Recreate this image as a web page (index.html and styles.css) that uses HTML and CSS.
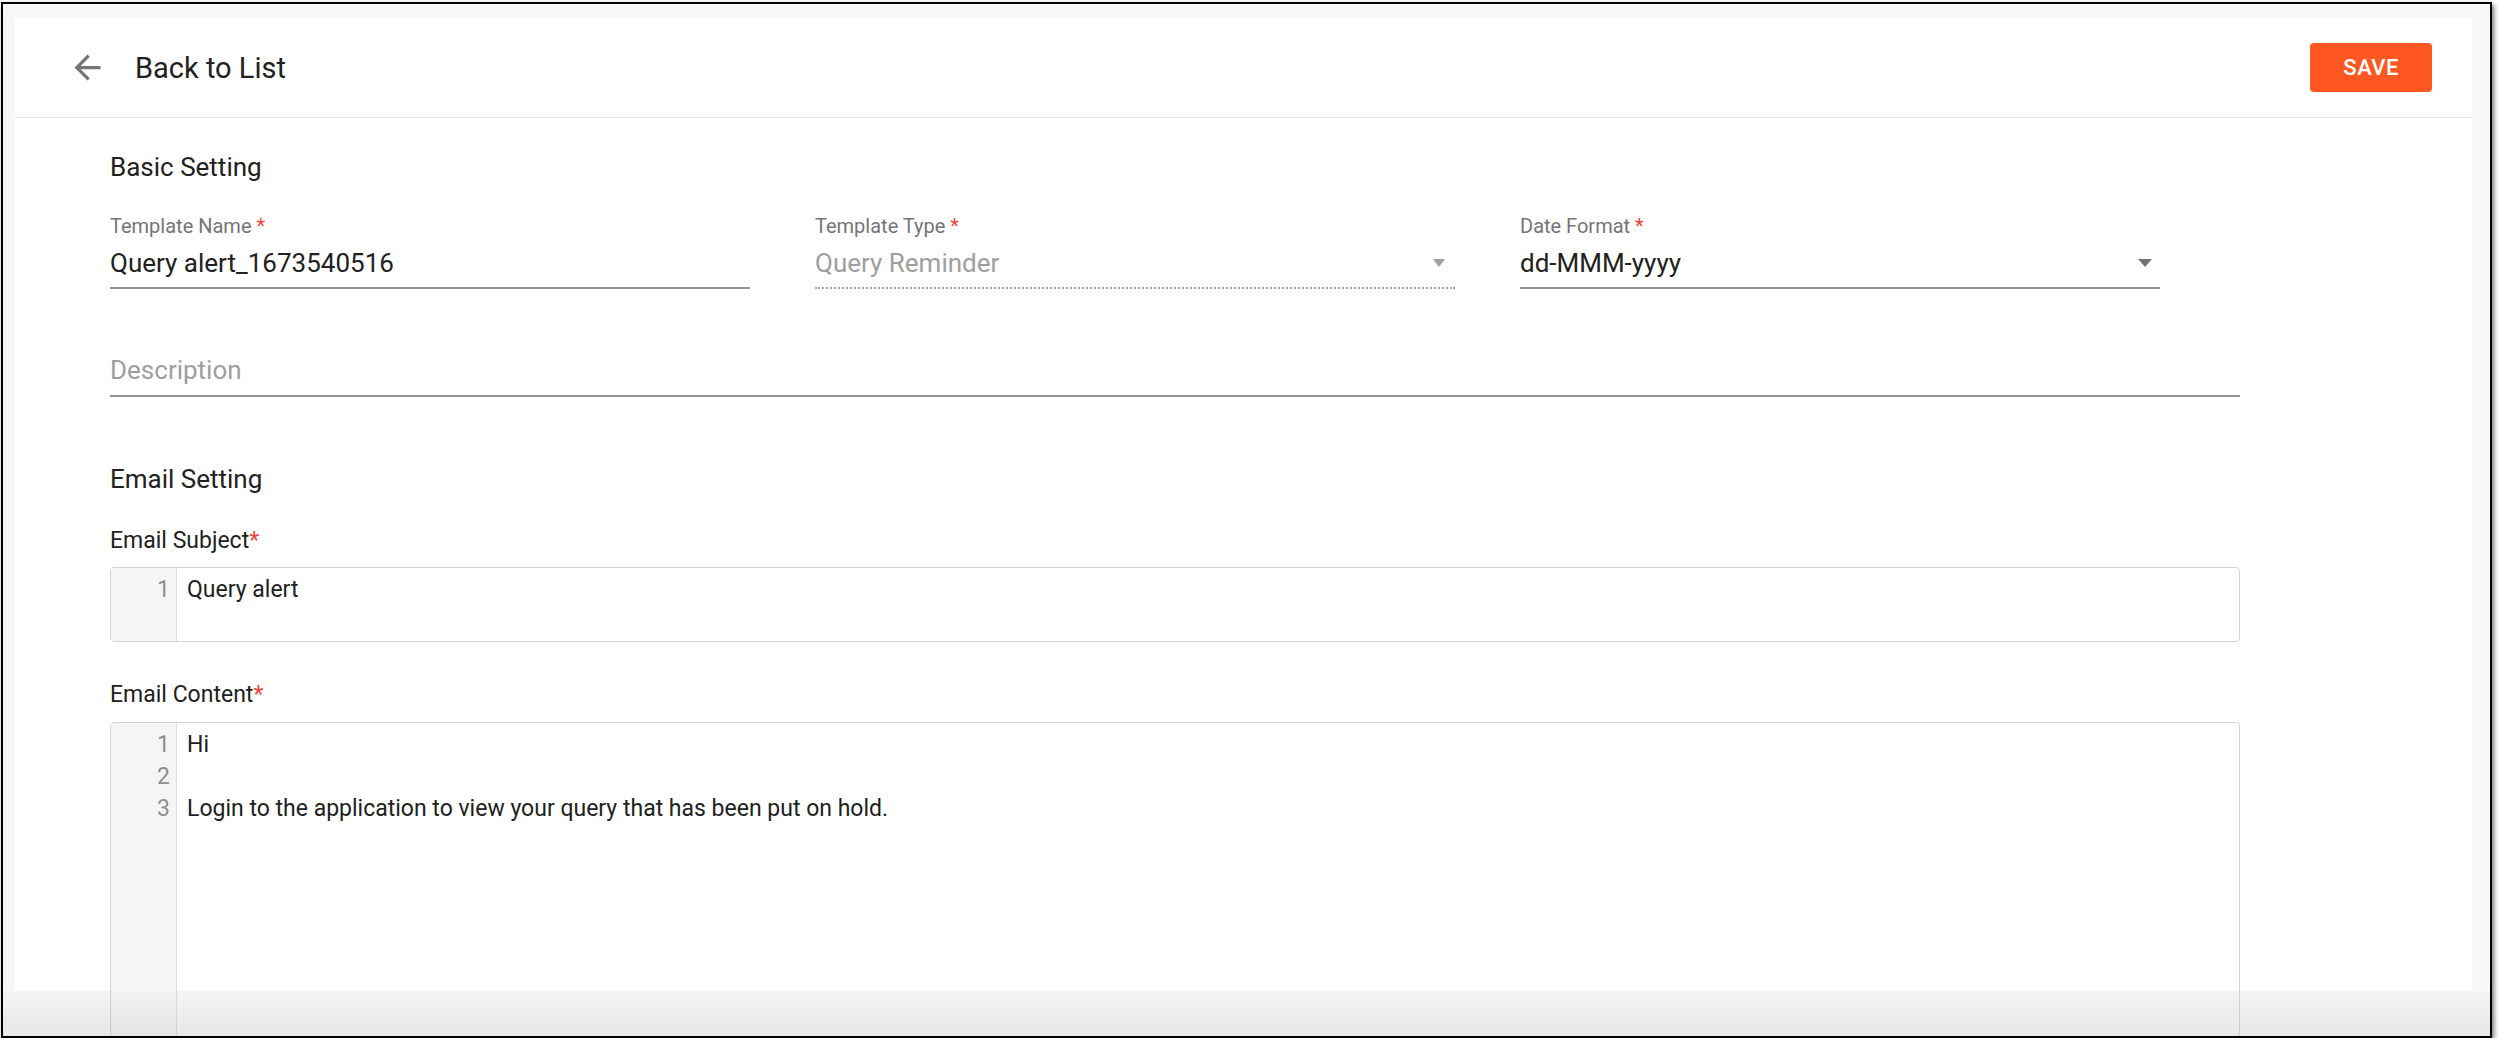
FILE: index.html
```html
<!DOCTYPE html>
<html lang="en">
<head>
    <meta charset="UTF-8">
    <meta name="viewport" content="width=device-width, initial-scale=1.0">
    <title>Edit Template</title>
    <link rel="stylesheet" href="styles.css">
</head>
<body>

    <div class="frame">
        <div class="panel">

            <!-- Top bar -->
            <div class="topbar">
                <a class="back" href="#">
                    <svg viewBox="0 0 24 24" width="39" height="39"><path d="M20 11H7.83l5.59-5.59L12 4l-8 8 8 8 1.41-1.41L7.83 13H20v-2z"/></svg>
                    <span>Back to List</span>
                </a>
                <button class="save">SAVE</button>
            </div>

            <div class="form">
                <h2 class="section-title">Basic Setting</h2>

                <div class="row">
                    <div class="field">
                        <label>Template Name <span class="req">*</span></label>
                        <div class="value">Query alert_1673540516</div>
                    </div>
                    <div class="field">
                        <label>Template Type <span class="req">*</span></label>
                        <div class="value select disabled">Query Reminder<span class="caret"></span></div>
                    </div>
                    <div class="field">
                        <label>Date Format <span class="req">*</span></label>
                        <div class="value select">dd-MMM-yyyy<span class="caret"></span></div>
                    </div>
                </div>

                <div class="value description">Description</div>

                <h2 class="section-title email-title">Email Setting</h2>

                <div class="editor-label">Email Subject<span class="req">*</span></div>
                <div class="editor subject">
                    <div class="gutter"><div>1</div></div>
                    <div class="lines"><div>Query alert</div></div>
                </div>

                <div class="editor-label content-label">Email Content<span class="req">*</span></div>
                <div class="editor content">
                    <div class="gutter"><div>1</div><div>2</div><div>3</div></div>
                    <div class="lines">
                        <div>Hi</div>
                        <div>&nbsp;</div>
                        <div>Login to the application to view your query that has been put on hold.</div>
                    </div>
                </div>
            </div>
        </div>

        <!-- fade at the bottom of the window -->
        <div class="fade"></div>
    </div>

</body>
</html>
```

FILE: styles.css
```css
* {
    box-sizing: border-box;
}

body {
    margin: 0;
    background-color: #fff;
    font-family: Roboto, "Liberation Sans", Arial, sans-serif;
    color: #212121;
}

/* Window frame */
.frame {
    position: relative;
    margin: 2px 0 0 1px;
    width: 2491px;
    height: 1036px;
    border: 2px solid #000;
    background-color: #f7f7f7;
    padding: 14px 18px 0 12px;
    overflow: hidden;
    box-shadow: 2px 3px 5px rgba(0, 0, 0, 0.55);
}

.panel {
    background-color: #fff;
    height: 973px;
}

.fade {
    position: absolute;
    left: 0;
    right: 0;
    bottom: 0;
    height: 45px;
    background: linear-gradient(rgba(0, 0, 0, 0.012), rgba(0, 0, 0, 0.065));
}

/* Top bar */
.topbar {
    display: flex;
    align-items: center;
    justify-content: space-between;
    height: 100px;
    border-bottom: 1px solid #e3e3e3;
    padding: 0 40px 0 53px;
}

.back {
    display: flex;
    align-items: center;
    gap: 28px;
    color: #212121;
    text-decoration: none;
    font-size: 29px;
}

.back svg {
    fill: #757575;
}

.save {
    height: 49px;
    padding: 0 33px;
    border: none;
    border-radius: 4px;
    background-color: #ff5722;
    color: #fff;
    font-family: Roboto, sans-serif;
    font-size: 22px;
    font-weight: 500;
    letter-spacing: 0.5px;
}

/* Form */
.form {
    padding: 34px 0 0 95px;
    width: 2225px;
}

.section-title {
    margin: 0;
    font-size: 26px;
    line-height: 30px;
    font-weight: 400;
}

.row {
    display: grid;
    grid-template-columns: repeat(3, 640px);
    column-gap: 65px;
    margin-top: 32px;
}

.field label {
    display: block;
    font-size: 20px;
    line-height: 24px;
    color: #757575;
}

.req {
    color: #f44336;
}

.value {
    position: relative;
    margin-top: 9px;
    font-size: 26px;
    line-height: 32px;
    padding-bottom: 8px;
    border-bottom: 2px solid #949494;
}

.value.disabled {
    color: #9e9e9e;
    border-bottom: 2px dotted #a8a8a8;
}

.caret {
    position: absolute;
    right: 8px;
    top: 12px;
    border-left: 7px solid transparent;
    border-right: 7px solid transparent;
    border-top: 8px solid #757575;
}

.disabled .caret {
    right: 10px;
    border-left-width: 6px;
    border-right-width: 6px;
    border-top-color: #a0a0a0;
}

.description {
    margin-top: 65px;
    padding-bottom: 9px;
    color: #9e9e9e;
}

.email-title {
    margin-top: 67px;
}

/* Code editors */
.editor-label {
    margin-top: 34px;
    font-size: 23px;
    line-height: 26px;
}

.content-label {
    margin-top: 40px;
}

.editor {
    display: flex;
    margin-top: 13px;
    border: 1px solid #d4d4d4;
    border-radius: 4px;
    font-size: 23px;
    line-height: 32px;
}

.editor.subject {
    height: 75px;
}

.editor.content {
    margin-top: 14px;
    height: 420px;
}

.gutter {
    width: 66px;
    padding: 6px 6px 0 0;
    text-align: right;
    color: #8f8f8f;
    background-color: #f5f5f5;
    border-right: 1px solid #dedede;
}

.lines {
    padding: 6px 0 0 10px;
}
```
